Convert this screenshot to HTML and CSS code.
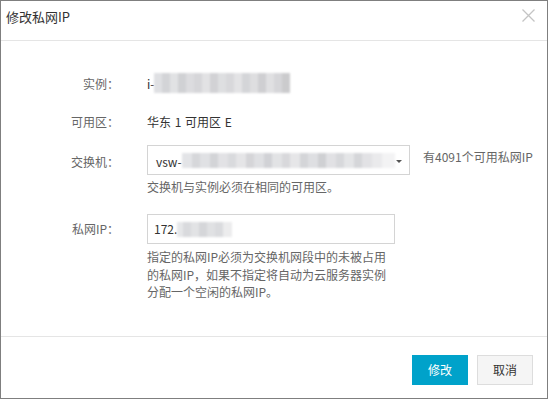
FILE: index.html
```html
<!DOCTYPE html>
<html lang="zh-CN">
<head>
<meta charset="utf-8">
<title>修改私网IP</title>
<link rel="stylesheet" href="styles.css">
</head>
<body>
<div class="dialog">
  <div class="dlg-header">
    <span class="dlg-title">修改私网IP</span>
    <button class="dlg-close" type="button" aria-label="关闭">
      <svg width="13" height="13" viewBox="0 0 13 13"><path d="M0.5 0.5 L12.5 12.5 M12.5 0.5 L0.5 12.5" stroke="#c4c4c4" stroke-width="1.3" fill="none"/></svg>
    </button>
  </div>
  <div class="dlg-body">
    <div class="row row-first">
      <span class="lbl">实例：</span>
      <div class="val val-text">i-<span class="mask mask-inst"></span></div>
    </div>
    <div class="row row-zone">
      <span class="lbl">可用区：</span>
      <div class="val val-text zone">华东 1 可用区 E</div>
    </div>
    <div class="row row-switch">
      <span class="lbl lbl-switch">交换机：</span>
      <div class="val">
        <div class="select-line">
          <div class="select">
            <span class="select-text">vsw-</span><span class="mask mask-vsw"></span>
            <i class="caret"></i>
          </div>
          <span class="avail">有4091个可用私网IP</span>
        </div>
        <div class="help help-switch">交换机与实例必须在相同的可用区。</div>
      </div>
    </div>
    <div class="row row-ip">
      <span class="lbl lbl-ip">私网IP：</span>
      <div class="val">
        <div class="input">
          <span class="input-text">172.</span><span class="mask mask-ip"></span>
        </div>
        <div class="help help-ip">指定的私网IP必须为交换机网段中的未被占用的私网IP，如果不指定将自动为云服务器实例分配一个空闲的私网IP。</div>
      </div>
    </div>
  </div>
  <div class="dlg-footer">
    <button class="btn btn-primary" type="button">修改</button>
    <button class="btn btn-default" type="button">取消</button>
  </div>
</div>
</body>
</html>
```
FILE: styles.css
```css
html, body {
  margin: 0;
  padding: 0;
  background: #ffffff;
}

body {
  font-family: "Noto Sans CJK SC", "Liberation Sans", sans-serif;
  font-size: 12px;
  color: #333333;
}

.dialog {
  width: 548px;
  height: 399px;
  box-sizing: border-box;
  border: 1px solid #7f7f7f;
  background: #ffffff;
  display: flex;
  flex-direction: column;
}

.dlg-header {
  height: 40px;
  box-sizing: border-box;
  border-bottom: 1px solid #e5e5e5;
  display: flex;
  justify-content: space-between;
  align-items: flex-start;
  padding: 0 12px 0 5px;
}

.dlg-title {
  margin-top: 6px;
  font-size: 13px;
  line-height: 20px;
  color: #333333;
}

.dlg-close {
  margin-top: 8px;
  padding: 0;
  border: 0;
  background: transparent;
  width: 13px;
  height: 13px;
  display: block;
}

.dlg-close svg {
  display: block;
}

.dlg-body {
  flex: 1;
  padding-top: 34px;
}

.row {
  display: flex;
  align-items: flex-start;
}

.row-zone {
  margin-top: 20px;
}

.row-switch {
  margin-top: 14px;
}

.row-ip {
  margin-top: 18px;
}

.lbl {
  width: 118px;
  flex: none;
  text-align: right;
  line-height: 18px;
  color: #666666;
}

.lbl-switch {
  padding-top: 8px;
}

.lbl-ip {
  padding-top: 6px;
}

.val {
  margin-left: 28px;
}

.val-text {
  display: flex;
  align-items: flex-start;
  line-height: 18px;
  color: #333333;
}

.zone {
  white-space: pre;
  word-spacing: 1px;
}

.mask {
  display: inline-block;
  flex: none;
  filter: blur(0.8px);
}

.mask-inst {
  width: 136px;
  height: 20px;
  margin-top: -2px;
  background:
    linear-gradient(90deg,
      #dfe0e3 0 8px, #d3d4d7 8px 16px, #e1e2e4 16px 24px, #d0d1d4 24px 32px,
      #dcdcdf 32px 40px, #d6d6d9 40px 48px, #e2e2e4 48px 56px, #d2d2d5 56px 64px,
      #dedfe1 64px 72px, #d8d8db 72px 80px, #e3e3e5 80px 88px, #d4d5d8 88px 96px,
      #dedee0 96px 104px, #cfcfd2 104px 112px, #e0e0e2 112px 120px, #d6d6d9 120px 128px,
      #cbcbcd 128px 136px);
}

.select-line {
  display: flex;
  align-items: flex-start;
}

.select {
  width: 263px;
  height: 30px;
  box-sizing: border-box;
  border: 1px solid #d4d4d4;
  background: #ffffff;
  padding: 7px 7px 0 8px;
  display: flex;
  align-items: flex-start;
  line-height: 18px;
}

.select-text {
  color: #333333;
}

.mask-vsw {
  width: 213px;
  height: 15px;
  background:
    linear-gradient(90deg,
      #e3e4e7 0 10px, #d6d7da 10px 18px, #e0e1e4 18px 28px, #d3d4d7 28px 36px,
      #e2e2e5 36px 46px, #d9dadd 46px 54px, #e5e5e7 54px 64px, #d5d5d8 64px 72px,
      #dfe0e3 72px 82px, #d1d2d6 82px 90px, #e2e3e5 90px 100px, #d8d8db 100px 108px,
      #e6e6e8 108px 118px, #d4d5d8 118px 126px, #dedfe2 126px 136px, #cfd0d3 136px 144px,
      #e1e1e4 144px 154px, #d7d8db 154px 162px, #e4e5e7 162px 172px, #d5d6d9 172px 180px,
      #e2e2e5 180px 190px, #eaeaec 190px 200px, #f3f3f4 200px 213px);
}

.caret {
  margin-left: auto;
  margin-top: 7px;
  width: 0;
  height: 0;
  border-left: 3px solid transparent;
  border-right: 3px solid transparent;
  border-top: 3px solid #555555;
}

.avail {
  margin-left: 13px;
  padding-top: 3px;
  line-height: 18px;
  color: #666666;
  white-space: nowrap;
}

.help {
  color: #666666;
  line-height: 18px;
}

.help-switch {
  margin-top: 3px;
}

.input {
  width: 248px;
  height: 30px;
  box-sizing: border-box;
  border: 1px solid #d4d4d4;
  background: #ffffff;
  padding: 5px 6px 0 6px;
  display: flex;
  align-items: flex-start;
  line-height: 18px;
}

.input-text {
  color: #333333;
}

.mask-ip {
  width: 55px;
  height: 15px;
  margin-top: 2px;
  background:
    linear-gradient(90deg,
      #e6e7e9 0 6px, #d9dadd 6px 14px, #e2e3e5 14px 22px, #d5d6d9 22px 30px,
      #e0e1e3 30px 38px, #dadbde 38px 46px, #ececed 46px 55px);
}

.help-ip {
  width: 248px;
  margin-top: 4px;
  line-height: 17.5px;
}

.dlg-footer {
  border-top: 1px solid #e5e5e5;
  height: 62px;
  box-sizing: border-box;
  display: flex;
  justify-content: flex-end;
  align-items: flex-start;
  gap: 9px;
  padding: 18px 14px 0 0;
}

.btn {
  width: 56px;
  height: 30px;
  box-sizing: border-box;
  padding: 0;
  font-family: "Noto Sans CJK SC", "Liberation Sans", sans-serif;
  font-size: 12px;
  line-height: 28px;
  text-align: center;
}

.btn-primary {
  background: #00a2ca;
  border: 1px solid #00a2ca;
  color: #ffffff;
}

.btn-default {
  background: #f5f5f5;
  border: 1px solid #dddddd;
  color: #333333;
}
```
